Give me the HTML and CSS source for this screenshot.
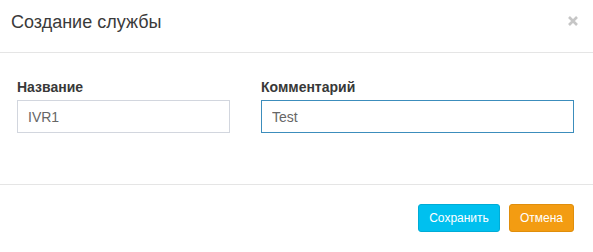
FILE: index.html
```html
<!DOCTYPE html>
<html lang="ru">
<head>
<meta charset="utf-8">
<title>Создание службы</title>
<link rel="stylesheet" href="styles.css">
</head>
<body>
<div class="modal">
  <div class="modal-header">
    <h4 class="modal-title">Создание службы</h4>
    <button class="close" type="button" aria-label="Закрыть">
      <svg width="10" height="10" viewBox="0 0 10 10"><path d="M1 1 L9 9 M9 1 L1 9" stroke="currentColor" stroke-width="2.6" stroke-linecap="butt"/></svg>
    </button>
  </div>
  <div class="modal-body">
    <div class="form-row">
      <div class="form-group">
        <label class="label">Название</label>
        <input class="input" type="text" value="IVR1">
      </div>
      <div class="form-group">
        <label class="label">Комментарий</label>
        <input class="input input-focus" type="text" value="Test">
      </div>
    </div>
  </div>
  <div class="modal-footer">
    <button class="btn btn-info" type="button">Сохранить</button>
    <button class="btn btn-warning" type="button">Отмена</button>
  </div>
</div>
</body>
</html>
```
FILE: styles.css
```css
* { box-sizing: border-box; }
html, body { margin: 0; padding: 0; background: #fff; }
body { font-family: "Liberation Sans", Arial, sans-serif; color: #333; }

.modal { width: 593px; height: 252px; background: #fff; display: flex; flex-direction: column; }

.modal-header {
  display: flex;
  align-items: flex-start;
  padding: 12px 15px 20px 11px;
  border-bottom: 1px solid #e5e5e5;
  height: 53px;
}
.modal-title { margin: 0; font-size: 18px; font-weight: normal; line-height: 20px; color: #3a3a3a; }
.close {
  margin-left: auto;
  margin-top: 4px;
  border: 0; background: none; padding: 0;
  width: 10px; height: 10px;
  color: #c6c6c6;
  display: flex;
}

.modal-body { padding: 24px 19px 0 17px; height: 131px; }
.form-row { display: grid; grid-template-columns: 213px 1fr; column-gap: 31px; }
.form-group { display: flex; flex-direction: column; }
.label { font-size: 14px; font-weight: bold; line-height: 20px; color: #383838; margin-bottom: 3px; }
.input {
  height: 33px;
  border: 1px solid #d2d6de;
  padding: 0 10px;
  font-family: inherit;
  font-size: 14px;
  color: #666;
  background: #fff;
  outline: none;
  border-radius: 0;
}
.input-focus { border-color: #3c8dbc; }

.modal-footer {
  border-top: 1px solid #e5e5e5;
  display: flex;
  justify-content: flex-end;
  gap: 9px;
  padding: 19px 19px 0 0;
  flex: 1;
}
.btn {
  height: 28px;
  padding: 0;
  font-family: inherit;
  font-size: 12px;
  color: #fff;
  border-radius: 3px;
  border: 1px solid transparent;
  line-height: 26px;
  text-align: center;
}
.btn-info { background: #00c0ef; border-color: #00acd6; width: 82px; }
.btn-warning { background: #f39c12; border-color: #e08e0b; width: 65px; }
```
